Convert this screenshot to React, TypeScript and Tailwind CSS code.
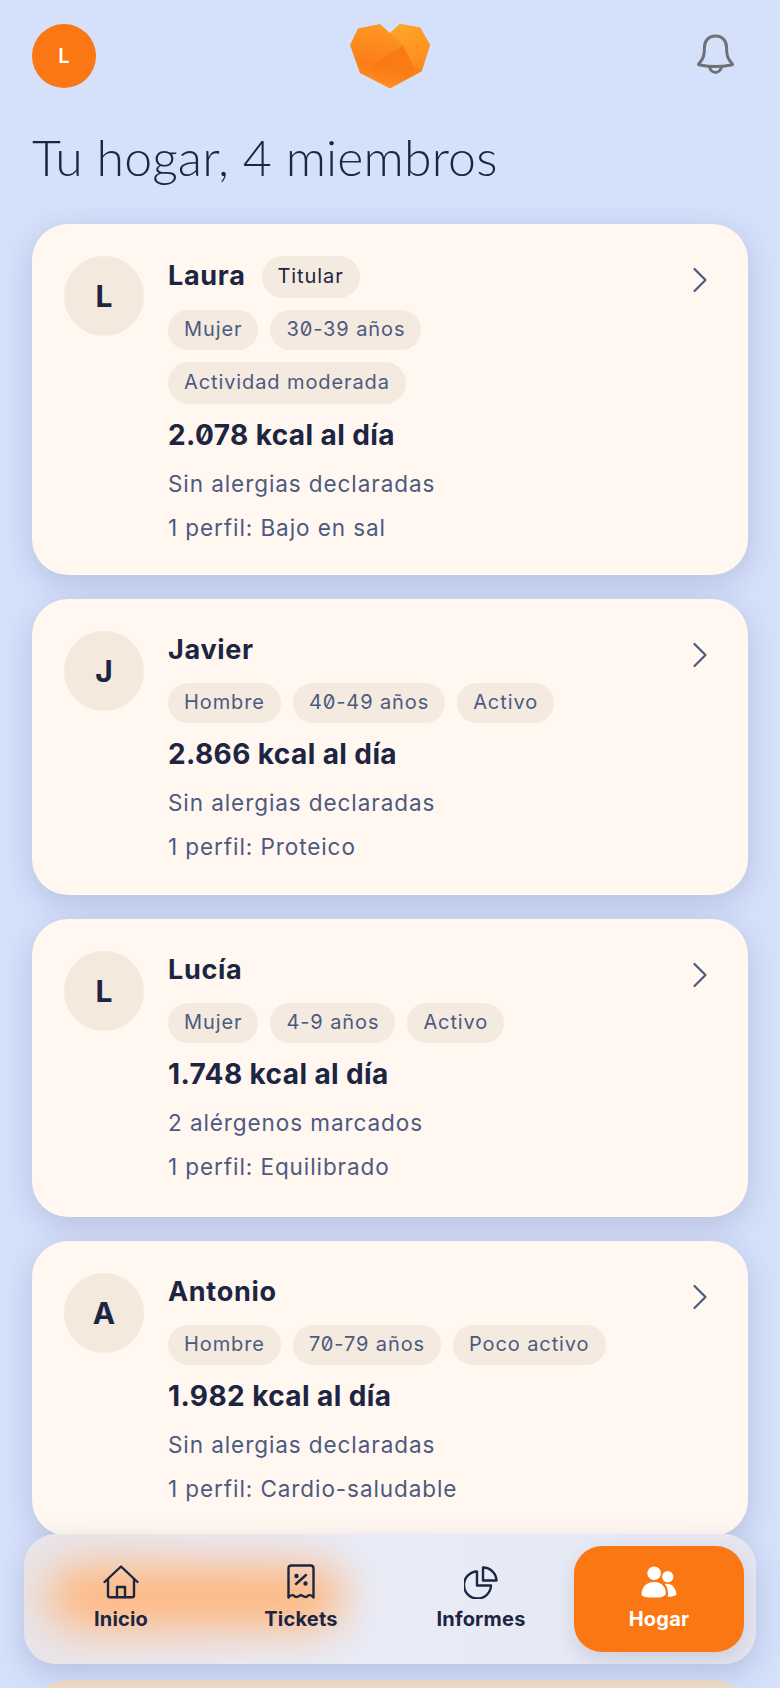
import type { ReactNode } from "react";
import { ChevronRight } from "lucide-react";

type Member = {
  name: string;
  initial: string;
  owner?: boolean;
  tags: string[][];
  kcal: string;
  allergies: string;
  profile: string;
  bottom: string;
};

const members: Member[] = [
  { name: "Laura", initial: "L", owner: true, tags: [["Mujer", "30-39 años"], ["Actividad moderada"]], kcal: "2.078 kcal al día", allergies: "Sin alergias declaradas", profile: "1 perfil: Bajo en sal", bottom: "pb-8" },
  { name: "Javier", initial: "J", tags: [["Hombre", "40-49 años", "Activo"]], kcal: "2.866 kcal al día", allergies: "Sin alergias declaradas", profile: "1 perfil: Proteico", bottom: "pb-[33px]" },
  { name: "Lucía", initial: "L", tags: [["Mujer", "4-9 años", "Activo"]], kcal: "1.748 kcal al día", allergies: "2 alérgenos marcados", profile: "1 perfil: Equilibrado", bottom: "pb-[35px]" },
  { name: "Antonio", initial: "A", tags: [["Hombre", "70-79 años", "Poco activo"]], kcal: "1.982 kcal al día", allergies: "Sin alergias declaradas", profile: "1 perfil: Cardio-saludable", bottom: "pb-8" },
];

function Logo() {
  return (
    <svg width="82" height="66" viewBox="0 0 82 66">
      <defs>
        <linearGradient id="heart" x1="0.6" y1="0" x2="0.4" y2="1">
          <stop offset="0" stopColor="#ff9a26" />
          <stop offset="0.65" stopColor="#fb7e17" />
          <stop offset="1" stopColor="#ff8f20" />
        </linearGradient>
        <linearGradient id="lobe" x1="0.3" y1="0" x2="0.7" y2="1">
          <stop offset="0" stopColor="#ffa627" />
          <stop offset="1" stopColor="#fd8a1d" />
        </linearGradient>
        <linearGradient id="facet" x1="0.5" y1="0" x2="0.5" y2="1">
          <stop offset="0" stopColor="#f8740f" />
          <stop offset="1" stopColor="#f8740f" stopOpacity="0" />
        </linearGradient>
      </defs>
      <path d="M1 21 L9 4.5 L31 0 L41 9 L51 0 L71 3.5 L81 21 L72.5 47.5 L41 64.5 L11 49 Z" fill="url(#heart)" />
      <path d="M41 9 L51 0 L71 3.5 L81 21 L72.5 47.5 L64 41 L54 21 Z" fill="url(#lobe)" />
      <path d="M54 22 L64 41 L66 52 L41 62 L18 46 L31 36 Z" fill="url(#facet)" opacity="0.8" />
    </svg>
  );
}

function BellIcon() {
  return (
    <svg width="37" height="40" viewBox="0 0 37 40" fill="none" stroke="#707174" strokeWidth="3" strokeLinejoin="round">
      <path d="M18.5 2 C11 2 7.5 7.5 7.5 13 C7.5 21 6.5 25 2 29.5 C1 30.5 1.5 31 3 31 C13 33 24 33 34 31 C35.5 31 36 30.5 35 29.5 C30.5 25 29.5 21 29.5 13 C29.5 7.5 26 2 18.5 2 Z" />
      <path d="M12.5 32.5 C13 36 15.5 38.5 18.5 38.5 C21.5 38.5 24 36 24.5 32.5" />
    </svg>
  );
}

function HomeIcon() {
  return (
    <svg width="36" height="34" viewBox="0 0 36 34" fill="none" stroke="#1c2541" strokeWidth="2.4" strokeLinecap="round" strokeLinejoin="round">
      <path d="M1.5 17 L18 1.5 L34.5 17" />
      <path d="M5 14.5 V30.5 C5 31.5 5.6 32.3 6.8 32.3 H29.2 C30.4 32.3 31 31.5 31 30.5 V14.5" />
      <path d="M14 32 V22 H22 V32" />
    </svg>
  );
}

function TicketIcon() {
  return (
    <svg width="28" height="35" viewBox="0 0 28 35" fill="none" stroke="#1c2541" strokeWidth="2.4" strokeLinecap="round" strokeLinejoin="round">
      <path d="M1.5 33.5 V4.5 C1.5 2.5 2.8 1.5 4.5 1.5 H23.5 C25.2 1.5 26.5 2.5 26.5 4.5 V33.5 C24 30.5 22.5 30.5 20 32.5 C18 34 16 32 14 31 C12 32 10 34 8 32.5 C5.5 30.5 4 30.5 1.5 33.5 Z" />
      <path d="M9 20 L19 11" />
      <circle cx="9.5" cy="12" r="1" fill="#1c2541" />
      <circle cx="18.5" cy="19.5" r="1" fill="#1c2541" />
    </svg>
  );
}

function ReportIcon() {
  return (
    <svg width="34" height="33" viewBox="0 0 34 33" fill="none" stroke="#1c2541" strokeWidth="2.4" strokeLinejoin="round">
      <path d="M13 5.5 A13.5 13.5 0 1 0 27 19.5 H13 Z" />
      <path d="M19 1.5 A13.5 13.5 0 0 1 32.5 14.5 H19 Z" />
    </svg>
  );
}

function UsersIcon() {
  return (
    <svg width="36" height="33" viewBox="0 0 36 34" fill="white">
      <circle cx="13" cy="7.5" r="7" />
      <circle cx="27" cy="11" r="5.8" />
      <path d="M0 29 C0 21 6 16.5 13 16.5 C20 16.5 25 21 25 28 C25 31.5 20 32.5 13 32.5 C6 32.5 0 32 0 29 Z" />
      <path d="M24 18.5 C30 17 35 21 36 29 C36 30.5 32 31.5 27 31.8 C28 27 27 22 24 18.5 Z" />
    </svg>
  );
}

function Chip({ label, dark, tall }: { label: string; dark?: boolean; tall?: boolean }) {
  return (
    <span className={"flex items-center rounded-full bg-[#f4eadf] px-4 pb-[2px] text-[20px] tracking-[0.9px] " + (tall ? "h-[42px] " : "h-10 ") + (dark ? "text-[#1c2541]" : "text-[#4c5a80]")}>
      {label}
    </span>
  );
}

function MemberCard({ member }: { member: Member }) {
  return (
    <div className={"flex rounded-[36px] bg-[#fff7f0] pl-8 pr-8 pt-8 shadow-[0_8px_30px_rgba(60,70,110,0.2)] " + member.bottom}>
      <div className="flex h-20 w-20 shrink-0 items-center justify-center rounded-full bg-[#f3e9dd] text-[30px] font-bold text-[#1c2541]">
        {member.initial}
      </div>
      <div className="ml-6 flex-1">
        <div className={"flex items-center gap-4 " + (member.owner ? "h-[42px]" : "h-10")}>
          <span className="pb-[2px] text-[27px] font-bold tracking-[0.7px] text-[#1c2541]">{member.name}</span>
          {member.owner && <Chip label="Titular" dark tall />}
        </div>
        <div className="mt-3 flex flex-col gap-3">
          {member.tags.map((row) => (
            <div key={row.join()} className="flex gap-3">
              {row.map((t) => (
                <Chip key={t} label={t} tall={t.length > 15} />
              ))}
            </div>
          ))}
        </div>
        <div className="mt-[15px] text-[28px] font-bold leading-8 tracking-[0.4px] text-[#1c2541]">{member.kcal}</div>
        <div className="mt-[18px] text-[22.5px] leading-[30px] tracking-[0.92px] text-[#4c5a80]">{member.allergies}</div>
        <div className="mt-[14px] text-[22.5px] leading-[30px] tracking-[0.92px] text-[#4c5a80]">{member.profile}</div>
      </div>
      <ChevronRight className="mr-[-6px] mt-[2px] shrink-0 text-[#4c5a80]" size={44} strokeWidth={1.2} />
    </div>
  );
}

function NavItem({ icon, label }: { icon: ReactNode; label: string }) {
  return (
    <div className="flex w-[180px] flex-col items-center pb-[2px]">
      <div className="flex h-9 items-end">{icon}</div>
      <span className="mt-[6px] text-[20px] font-bold leading-7 tracking-[0.2px] text-[#1c2541]">{label}</span>
    </div>
  );
}

export default function App() {
  return (
    <div className="relative h-[1688px] overflow-hidden bg-[#d5e0fb] font-['Inter',sans-serif] [font-feature-settings:'zero']">
      <header className="relative flex h-[127px] items-start justify-between pl-8 pr-[46px] pt-6">
        <div className="flex h-16 w-16 items-center justify-center rounded-full bg-[#fb7713] text-[20px] font-semibold text-white">L</div>
        <div className="absolute left-[349px] top-[24px]">
          <Logo />
        </div>
        <div className="pt-[10px]">
          <BellIcon />
        </div>
      </header>
      <h1 className="pl-8 font-['Lato',sans-serif] text-[50px] font-light leading-[60px] tracking-[0.15px] text-[#1c2541]">Tu hogar, 4 miembros</h1>
      <main className="mt-[37px] flex flex-col gap-6 px-8">
        {members.map((m) => (
          <MemberCard key={m.name} member={m} />
        ))}
        <div className="mt-[120px] h-40 rounded-[36px] bg-[#f3dfc6]" />
      </main>

      {/* floating tab bar */}
      <nav className="absolute left-6 top-[1534px] h-[130px] w-[732px] overflow-hidden rounded-[32px] bg-linear-to-r from-[#e9e5ea] via-[#e9ecf8] to-[#e4e5ef] shadow-[0_10px_28px_rgba(60,70,110,0.2)]">
        <div className="absolute left-[24px] top-[32px] h-[62px] w-[296px] rounded-[30px] bg-[#ffb67c] blur-[22px]" />
        <div className="relative flex h-full items-center pl-[7px] pr-3">
          <NavItem icon={<HomeIcon />} label="Inicio" />
          <NavItem icon={<TicketIcon />} label="Tickets" />
          <NavItem icon={<ReportIcon />} label="Informes" />
          <div className="ml-[3px] flex h-[106px] w-[170px] flex-col items-center justify-center rounded-[28px] bg-[#fb7713] pb-[2px] shadow-[0_8px_18px_rgba(60,70,110,0.14)]">
            <div className="flex h-9 items-end">
              <UsersIcon />
            </div>
            <span className="mt-[6px] text-[20px] font-bold leading-7 tracking-[0.2px] text-white">Hogar</span>
          </div>
        </div>
      </nav>
    </div>
  );
}
